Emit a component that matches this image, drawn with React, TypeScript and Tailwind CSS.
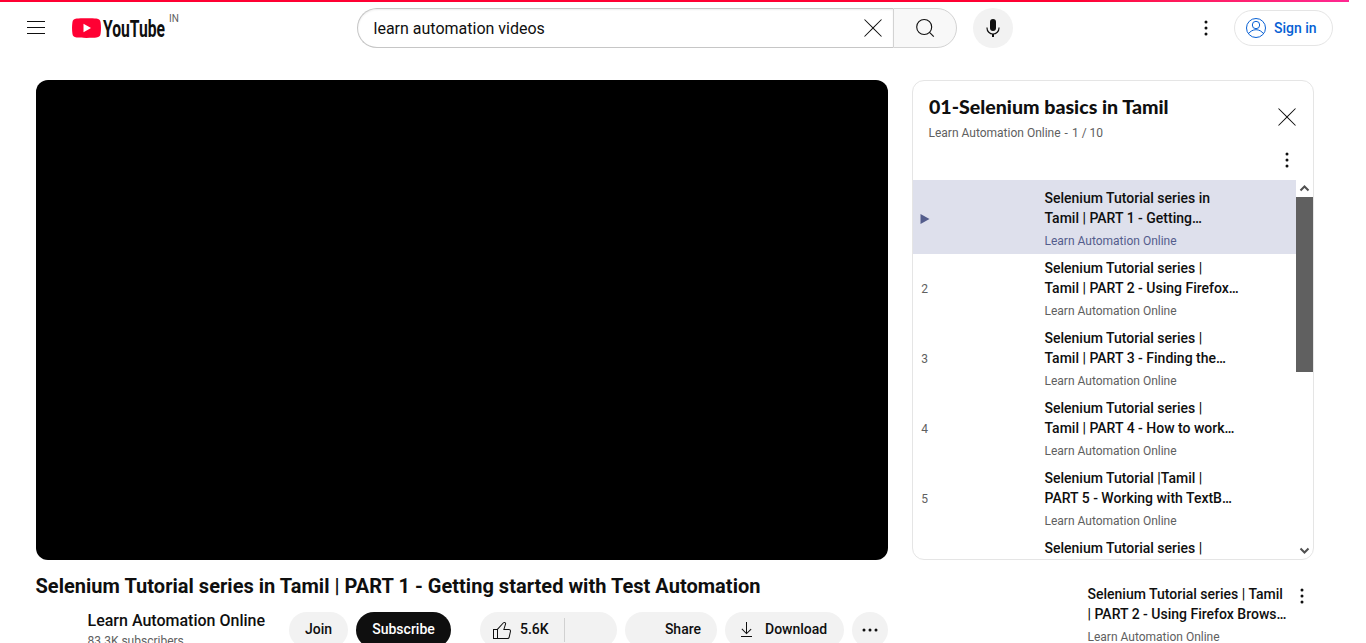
import React from "react";

const META = "Learn Automation Online";

const PLAYLIST = [
  { index: "1", lines: ["Selenium Tutorial series in", "Tamil | PART 1 - Getting…"] },
  { index: "2", lines: ["Selenium Tutorial series |", "Tamil | PART 2 - Using Firefox…"] },
  { index: "3", lines: ["Selenium Tutorial series |", "Tamil | PART 3 - Finding the…"] },
  { index: "4", lines: ["Selenium Tutorial series |", "Tamil | PART 4 - How to work…"] },
  { index: "5", lines: ["Selenium Tutorial |Tamil |", "PART 5 - Working with TextB…"] },
  { index: "6", lines: ["Selenium Tutorial series |"] },
];

function Icon({ d, className = "" }: { d: string; className?: string }) {
  return (
    <svg viewBox="0 0 24 24" className={`size-6 shrink-0 ${className}`} fill="currentColor">
      <path d={d} />
    </svg>
  );
}

const MENU = "M21 6H3V5h18v1zm0 5H3v1h18v-1zm0 6H3v1h18v-1z";
const CLOSE =
  "m12.71 12 8.15 8.15-.71.71L12 12.71l-8.15 8.15-.71-.71L11.29 12 3.15 3.85l.71-.71L12 11.29l8.15-8.15.71.71z";
const LIKE =
  "M18.77,11h-4.23l1.52-4.94C16.38,5.03,15.54,4,14.38,4c-0.58,0-1.14,0.24-1.52,0.65L7,11H3v10h4h1h9.43c1.06,0,1.98-0.67,2.19-1.61l1.34-6C21.23,12.15,20.18,11,18.77,11z M7,20H4v-8h3V20z M19.98,13.17l-1.34,6C18.54,19.65,18.03,20,17.43,20H8v-8.61l5.6-6.06C13.79,5.12,14.08,5,14.38,5c0.26,0,0.5,0.11,0.63,0.3c0.07,0.1,0.15,0.26,0.09,0.47l-1.52,4.94L13.18,12h1.35h4.23c0.41,0,0.8,0.17,1.03,0.46C19.92,12.61,20.05,12.86,19.98,13.17z";
const DOWNLOAD = "M17 18v1H6v-1h11zm-.5-6.6-.7-.7-3.8 3.7V4h-1v10.4l-3.8-3.8-.7.7 5 5 5-4.9z";
const DOTS_V =
  "M12 4.5a1.5 1.5 0 1 1 0 3 1.5 1.5 0 0 1 0-3zm0 6a1.5 1.5 0 1 1 0 3 1.5 1.5 0 0 1 0-3zm0 6a1.5 1.5 0 1 1 0 3 1.5 1.5 0 0 1 0-3z";
const DOTS_H =
  "M6 10.5a1.5 1.5 0 1 1 0 3 1.5 1.5 0 0 1 0-3zm6 0a1.5 1.5 0 1 1 0 3 1.5 1.5 0 0 1 0-3zm6 0a1.5 1.5 0 1 1 0 3 1.5 1.5 0 0 1 0-3z";

function Logo() {
  return (
    <svg width="110" height="40" viewBox="0 -8 110 40" className="ml-6 shrink-0">
      <path
        d="M4.6 2.5C8 2 21 2 24.400 2.500C27.200 2.800 28.300 4 28.600 6.500C29.100 10 29.100 14 28.600 17.500C28.300 20 27.200 21.200 24.400 21.500C21 22 8 22 4.600 21.500C1.800 21.200 .7 20 .4 17.500C-.1 14 -.1 10 .4 6.500C.7 4 1.800 2.800 4.600 2.500Z"
        fill="#ff0033"
      />
      <path d="M11.500 7.800 19 12l-7.500 4.200z" fill="#fff" />
      <text
        x="31"
        y="20.700"
        textLength="62"
        lengthAdjust="spacingAndGlyphs"
        fill="#0f0f0f"
        fontFamily="Roboto, sans-serif"
        fontWeight="700"
        fontSize="23"
      >
        YouTube
      </text>
      <text x="97" y="6" fill="#606060" fontFamily="Roboto, sans-serif" fontSize="10">
        IN
      </text>
    </svg>
  );
}

function Header() {
  return (
    <header className="flex h-[54px] items-start">
      <div className="flex h-[52px] w-[357px] items-center pl-6">
        <Icon d={MENU} />
        <Logo />
      </div>
      <div className="mt-1.5 flex h-10 w-[600px]">
        <div className="flex w-[536px] items-center justify-between rounded-l-full border border-r-0 border-[#c6c6c6] pr-2 pl-[15.500px] text-base shadow-[inset_0_1px_2px_#eee]">
          <span className="pt-0.5">learn automation videos</span>
          <Icon d={CLOSE} />
        </div>
        <div className="flex w-16 items-center justify-center rounded-r-full border border-[#d3d3d3] bg-[#f8f8f8]">
          <svg viewBox="0 0 24 24" className="size-6" fill="none" stroke="#0f0f0f" strokeWidth="1.100">
            <circle cx="11.200" cy="11" r="7.500" />
            <path d="m16.500 16.300 4.300 4.300" />
          </svg>
        </div>
      </div>
      <div className="mt-1.5 ml-4 flex size-10 items-center justify-center rounded-full bg-[#f2f2f2]">
        <svg viewBox="0 0 24 24" className="size-6">
          <rect x="9" y="3" width="6" height="12" rx="3" fill="#0f0f0f" />
          <path d="M6 11.500v.5a6 6 0 0 0 12 0v-.5" fill="none" stroke="#0f0f0f" strokeWidth="1.200" />
          <path d="M11 18h2v3h-2z" fill="#0f0f0f" />
        </svg>
      </div>
      <div className="ml-auto flex h-[52px] items-center pr-4">
        <Icon d={DOTS_V} className="mr-4" />
        <div className="flex h-9 w-[99px] items-center rounded-full border border-[#e5e5e5] pl-[9px] text-sm font-medium text-[#065fd4]">
          <svg viewBox="0 0 24 24" className="mr-1.5 size-6 shrink-0" fill="none" stroke="#065fd4" strokeWidth="1">
            <circle cx="12" cy="12" r="9.500" />
            <circle cx="12" cy="9" r="3.700" />
            <path d="M4.600 17.600C6.300 15.200 9 13.700 12 13.700s5.700 1.500 7.400 3.900" />
          </svg>
          Sign in
        </div>
      </div>
    </header>
  );
}

function PlaylistPanel() {
  return (
    <section className="flex h-[480px] flex-col overflow-hidden rounded-xl border border-[#e5e5e5]">
      <div className="flex h-[99px] shrink-0 justify-between pr-3.5 pl-[15.500px]">
        <div className="pt-3">
          <h2 className="h-7">
            <svg width="242" height="28" className="block">
              <text
                x="0"
                y="21"
                textLength="239.500"
                lengthAdjust="spacingAndGlyphs"
                fill="#0f0f0f"
                fontFamily="Lato, sans-serif"
                fontWeight="900"
                fontSize="18.800"
              >
                01-Selenium basics in Tamil
              </text>
            </svg>
          </h2>
          <p className="mt-[3px] text-xs leading-[18px] text-[#606060]">
            {META}
            <span className="ml-1">-</span>
            <span className="ml-1">1 / 10</span>
          </p>
        </div>
        <div className="flex flex-col gap-[19px] pt-6">
          <Icon d={CLOSE} />
          <Icon d={DOTS_V} />
        </div>
      </div>
      <div className="flex min-h-0 grow">
        <ol className="min-w-0 grow overflow-hidden">
          {PLAYLIST.map((item, i) => (
            <li
              key={item.index}
              className={`flex ${
                i === 0 ? "h-[74px] items-center bg-[#dee0ec] pt-1" : i === 5 ? "h-[70px] items-start pt-1" : "h-[70px] items-center"
              }`}
            >
              <div className="flex w-6 shrink-0 justify-center pr-px text-xs text-[#606060]">
                {i === 0 ? (
                  <svg width="10" height="10" viewBox="0 0 10 10">
                    <path d="M.5 0 9.500 5 .5 10z" fill="#545d8c" />
                  </svg>
                ) : (
                  i < 5 && item.index
                )}
              </div>
              <div className="ml-[107.500px] text-sm leading-5 font-medium whitespace-nowrap">
                {item.lines.map((line) => (
                  <p key={line}>{line}</p>
                ))}
                {i < 5 && (
                  <p
                    className={`mt-1 text-xs leading-[18px] font-normal ${
                      i === 0 ? "text-[#545d8c]" : "text-[#606060]"
                    }`}
                  >
                    {META}
                  </p>
                )}
              </div>
            </li>
          ))}
        </ol>
        <div className="flex w-[17px] shrink-0 flex-col">
          <svg width="17" height="17" fill="none" stroke="#505050" strokeWidth="2">
            <path d="m4.500 10.500 4-4 4 4" />
          </svg>
          <div className="h-[175px] bg-[#606060]" />
          <svg width="17" height="17" className="mt-auto" fill="none" stroke="#505050" strokeWidth="2">
            <path d="m4.500 6.500 4 4 4-4" />
          </svg>
        </div>
      </div>
    </section>
  );
}

function Actions() {
  return (
    <div className="flex h-9 text-sm leading-[34px] font-medium">
      <button className="flex w-[59px] justify-center rounded-full bg-[#f2f2f2]">Join</button>
      <button className="ml-2 flex w-[95px] justify-center rounded-full bg-[#0f0f0f] text-white">Subscribe</button>
      <div className="ml-[29px] flex w-[137px] items-center rounded-full bg-[#f2f2f2] pl-2.5">
        <Icon d={LIKE} />
        <span className="ml-1.5 w-11 self-start">5.6K</span>
        <span className="h-6 w-px bg-[#d1d1d1]" />
      </div>
      <button className="ml-2 flex w-[92px] justify-end rounded-full bg-[#f2f2f2] pr-4">Share</button>
      <button className="ml-2 flex w-[119px] items-center rounded-full bg-[#f2f2f2] pl-2.5">
        <Icon d={DOWNLOAD} className="mr-1.5" />
        <span className="self-start">Download</span>
      </button>
      <button className="ml-2 flex size-9 items-center justify-center rounded-full bg-[#f2f2f2]">
        <Icon d={DOTS_H} />
      </button>
    </div>
  );
}

export default function App() {
  return (
    <div className="h-[643px] w-full overflow-hidden bg-white font-[Roboto,sans-serif] text-[#0f0f0f]">
      <div className="w-[1349px]">
        <div className="h-0.5 bg-linear-to-r from-[#ff0033] from-80% to-[#ff2791]" />
        <Header />
        <main className="flex gap-6 pt-6 pl-9">
          <div className="w-[852px] shrink-0">
            <div className="h-[480px] rounded-xl bg-black" />
            <h1 className="mt-3 -ml-[0.500px] text-xl leading-7 font-bold tracking-[0.024px]">
              Selenium Tutorial series in Tamil | PART 1 - Getting started with Test Automation
            </h1>
            <div className="mt-3 flex justify-between pl-[51.500px]">
              <div className="-mt-0.5 whitespace-nowrap">
                <p className="text-base leading-[22px] font-medium">{META}</p>
                <p className="text-xs leading-[18px] text-[#606060]">83.3K subscribers</p>
              </div>
              <Actions />
            </div>
          </div>
          <aside className="w-[402px] shrink-0">
            <PlaylistPanel />
            <div className="mt-6 flex justify-between pl-[175.500px]">
              <div className="text-sm leading-5 font-medium whitespace-nowrap">
                <p>Selenium Tutorial series | Tamil</p>
                <p>| PART 2 - Using Firefox Brows…</p>
                <p className="mt-1 text-xs leading-[18px] font-normal text-[#606060]">{META}</p>
              </div>
              <Icon d={DOTS_V} />
            </div>
          </aside>
        </main>
      </div>
    </div>
  );
}
